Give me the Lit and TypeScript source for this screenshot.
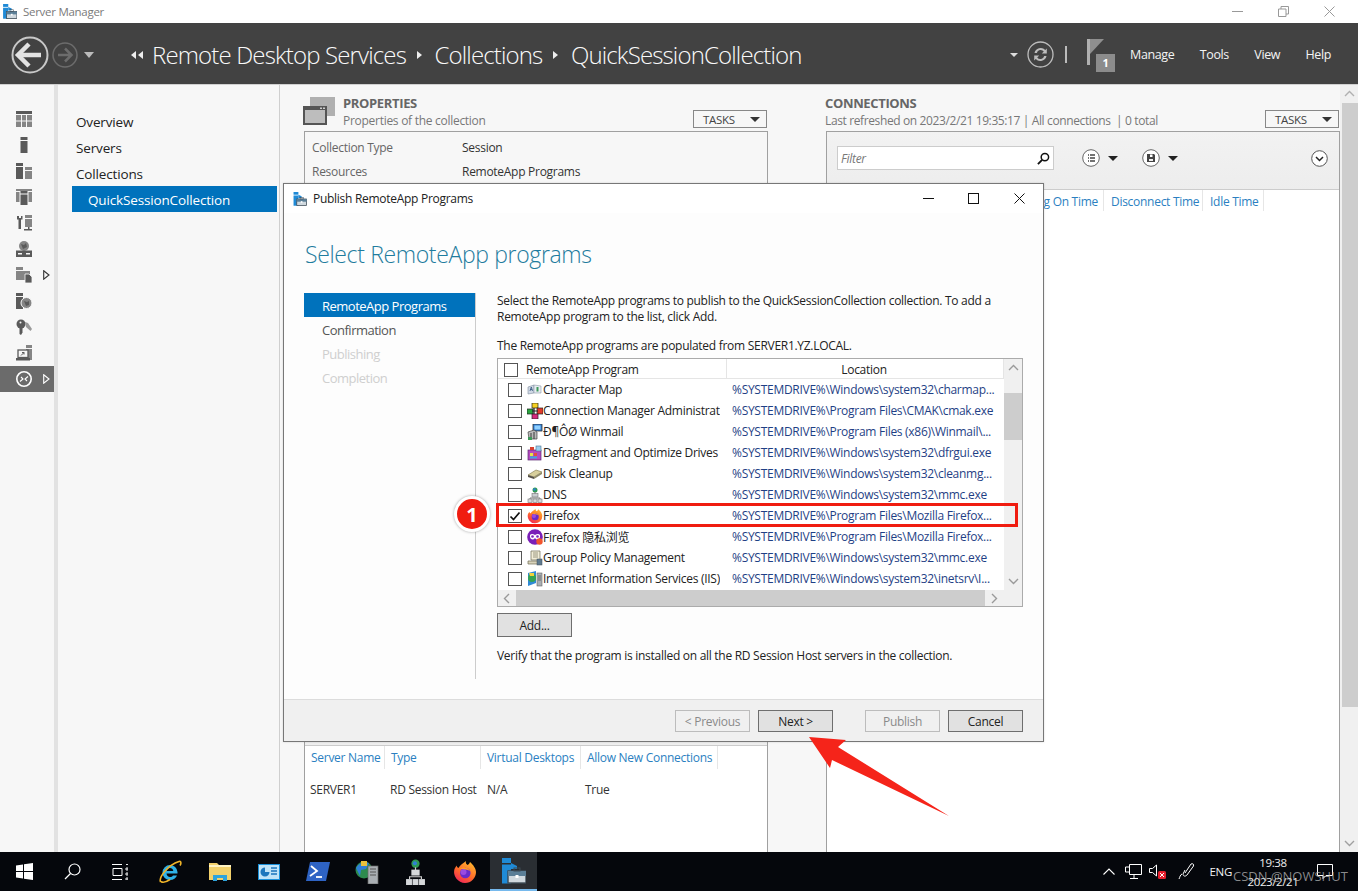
import { LitElement, html, css, svg } from "lit";
import { customElement } from "lit/decorators.js";

const smIcon = (w: number, h: number) => html`<svg width=${w} height=${h} viewBox="0 0 24 26">
  <rect x="0" y="0" width="9" height="5" fill="#1f8ad6"/><rect x="0" y="6.5" width="9" height="19" fill="#1f8ad6"/>
  <path d="M9 5l6 3v3H9z" fill="#1f8ad6"/>
  <rect x="6" y="13" width="18" height="12" fill="#cfd8de" stroke="#3c4a55" stroke-width="1.4"/>
  <rect x="6" y="13" width="18" height="5" fill="#5b7f97"/><rect x="12" y="10" width="6" height="3" fill="none" stroke="#3c4a55"/>
  <rect x="13.5" y="17" width="3" height="3" fill="#fff"/></svg>`;

const ffIcon = (s: number) => html`<svg width=${s} height=${s} viewBox="0 0 24 24">
  <defs><linearGradient id="ffg" x1="0.8" y1="0" x2="0.2" y2="1"><stop offset="0" stop-color="#ffbd2e"/><stop offset="0.55" stop-color="#ff6a2a"/><stop offset="1" stop-color="#f0215c"/></linearGradient></defs>
  <path d="M12 23A11 11 0 0 1 1.5 9C2.5 7 3 6.5 3.5 5.5 4 7 4.5 7.5 5.5 8 7 5 10 3.5 13 1c-.5 2 0 3 1.500 4 1-.5 2-1.500 2.500-3 3 2.500 6 6.500 6 10A11 11 0 0 1 12 23z" fill="url(#ffg)"/>
  <circle cx="12.300" cy="13" r="5.300" fill="#6a2bc9"/><circle cx="10.500" cy="12" r="3" fill="#9b4be0"/>
  <path d="M7 9c3-2.500 8-2 10 2-2.500-1.500-6-2-10-2z" fill="#ff9a2a"/></svg>`;

const pvIcon = html`<svg width="16" height="16" viewBox="0 0 16 16">
  <circle cx="8" cy="8" r="7.800" fill="#7a1fb8"/><path d="M3 6c1-1.500 3-1.500 5 0 2-1.500 4-1.500 5 0 .5 3-1 4.500-2.800 4.500S8.500 9 8 9s-.5 1.500-2.200 1.500S2.500 9 3 6z" fill="#fff"/>
  <circle cx="5.500" cy="7.500" r="1.300" fill="#7a1fb8"/><circle cx="10.500" cy="7.500" r="1.300" fill="#7a1fb8"/>
  <circle cx="12.500" cy="12.500" r="3.200" fill="#f2542d"/></svg>`;

const appIcons: Record<string, unknown> = {
  charmap: html`<svg width="16" height="16" viewBox="0 0 16 16"><path d="M1 5l6-2v8l-6 1z" fill="#cfd8e4" stroke="#7f8d9e" stroke-width=".6"/><path d="M7 3l7 1v7l-7 0z" fill="#e8edf2" stroke="#8c99a8" stroke-width=".6"/><path d="M3 9l1.300-4L5.500 9M3.400 7.500h1.800" stroke="#35567f" fill="none" stroke-width=".8"/><rect x="9.500" y="5" width="2" height="4.500" fill="#3e9a5a"/></svg>`,
  cmak: html`<svg width="16" height="16" viewBox="0 0 16 16"><rect x="5" y="0" width="6" height="5" fill="#f5d021" stroke="#222" stroke-width=".7"/><rect x="0" y="6" width="6" height="5" fill="#29a63f" stroke="#222" stroke-width=".7"/><rect x="10" y="5" width="6" height="6" fill="#e23a2a" stroke="#222" stroke-width=".7"/><rect x="5" y="11" width="6" height="5" fill="#d62a7c" stroke="#222" stroke-width=".7"/><path d="M7 5v6M5 8h6" stroke="#222" stroke-width="1.200"/></svg>`,
  winmail: html`<svg width="16" height="16" viewBox="0 0 16 16"><rect x="6" y="0" width="9" height="7" fill="#2f7fd6" stroke="#333" stroke-width=".8"/><rect x="7.500" y="1.500" width="6" height="4" fill="#8fd0ff"/><path d="M1 8l6-2 3 2v7H2z" fill="#b9b9b9" stroke="#444" stroke-width=".7"/><path d="M4 9v6M7 8v7" stroke="#3a3a3a"/><rect x="1" y="13" width="4" height="3" fill="#3e9a5a"/></svg>`,
  defrag: html`<svg width="16" height="16" viewBox="0 0 16 16"><rect x="1" y="5" width="13" height="10" fill="#b54ac0" stroke="#5c2b73" stroke-width=".7"/><rect x="3" y="8" width="3" height="3" fill="#e8e34a"/><rect x="7" y="8" width="3" height="3" fill="#e2513c"/><rect x="3" y="11.500" width="7" height="2" fill="#3fa7e0"/><rect x="9" y="1" width="5" height="5" fill="#9ad0ef" stroke="#4c6e8a" stroke-width=".6"/><rect x="3" y="2" width="4" height="3" fill="#d9412f"/></svg>`,
  disk: html`<svg width="16" height="16" viewBox="0 0 16 16"><path d="M1 9l8-5 6 2-8 5z" fill="#d8cf9c" stroke="#7a7448" stroke-width=".6"/><path d="M1 9l6 2v2L1 11z" fill="#55504a"/><path d="M7 11l8-5v2l-8 5z" fill="#8f8a68"/></svg>`,
  dns: html`<svg width="16" height="16" viewBox="0 0 16 16"><circle cx="8" cy="3" r="2.500" fill="#2f9a52"/><circle cx="7.500" cy="2.500" r="1.200" fill="#2f7fd6"/><path d="M8 5v3" stroke="#777"/><rect x="5" y="6.500" width="6" height="3.500" fill="#c9ccd0" stroke="#777" stroke-width=".6"/><path d="M3 12v-1h10v1" fill="none" stroke="#777"/><rect x="1" y="12" width="4" height="3.500" fill="#d5d7da" stroke="#777" stroke-width=".6"/><rect x="6" y="12" width="4" height="3.500" fill="#d5d7da" stroke="#777" stroke-width=".6"/><rect x="11" y="12" width="4" height="3.500" fill="#d5d7da" stroke="#777" stroke-width=".6"/></svg>`,
  gp: html`<svg width="16" height="16" viewBox="0 0 16 16"><path d="M4 1h9v9H4z" fill="#f2edd8" stroke="#6f6a55" stroke-width=".7"/><path d="M6 3h5M6 5h5M6 7h5" stroke="#77725c" stroke-width=".7"/><path d="M1 11h10l3 0v3H1z" fill="#d9d3bb" stroke="#6f6a55" stroke-width=".7"/><rect x="10" y="9" width="5" height="6" fill="#5f7a8f" stroke="#3f4c58" stroke-width=".5"/></svg>`,
  iis: html`<svg width="16" height="16" viewBox="0 0 16 16"><path d="M1 2l8-2v12l-8 3z" fill="#2f8ad6"/><circle cx="5" cy="7" r="4" fill="#35a352"/><path d="M2 2h5v3H3z" fill="#f0d33a"/><rect x="10" y="2" width="5" height="13" fill="#a9aeb3" stroke="#666" stroke-width=".6"/><path d="M11 5h3M11 7h3M11 9h3" stroke="#555" stroke-width=".7"/></svg>`,
};

const D = "#5a5a5a", M = "#858585";
const railIcons = [
  svg`<rect width="16" height="3" fill="${D}"/><g fill="${M}"><rect y="4" width="5" height="5.500"/><rect x="6" y="4" width="4" height="5.500"/><rect x="11" y="4" width="5" height="5.500"/><rect y="10.500" width="5" height="5.500"/><rect x="6" y="10.500" width="4" height="5.500"/><rect x="11" y="10.500" width="5" height="5.500"/></g>`,
  svg`<rect x="4.500" width="7" height="3" fill="${D}"/><rect x="4.500" y="4" width="7" height="12" fill="${D}"/>`,
  svg`<rect width="7" height="3" fill="${D}"/><rect y="4" width="7" height="12" fill="${D}"/><rect x="9" y="4" width="7" height="3" fill="${M}"/><rect x="9" y="8" width="7" height="8" fill="${M}"/>`,
  svg`<rect width="16" height="2" fill="${M}"/><rect y="3" width="3.500" height="10" fill="${M}"/><rect x="12.500" y="3" width="3.500" height="10" fill="${M}"/><rect x="4.500" y="2" width="7" height="2.500" fill="${D}"/><rect x="4.500" y="5.500" width="7" height="10.500" fill="${D}"/>`,
  svg`<path d="M1 1v3.500h1.500V14h2.500V4.500h1.500V1L5 1v2H3V1z" fill="${D}"/><rect x="9" width="7" height="3" fill="${M}"/><rect x="9" y="4" width="7" height="8" fill="${M}"/><rect x="12" y="12" width="1.500" height="2" fill="${D}"/><rect x="8" y="14" width="8" height="1.500" fill="${D}"/>`,
  svg`<circle cx="8" cy="5" r="5" fill="${M}"/><path d="M5 3l3 1 2-2 1 4-4 2z" fill="${D}"/><rect y="9.500" width="16" height="6.500" fill="${D}"/><rect x="2" y="12" width="4" height="1.500" fill="#f7f7f7"/><rect x="10" y="12" width="4" height="1.500" fill="#f7f7f7"/>`,
  svg`<rect width="7" height="3" fill="${M}"/><rect y="4" width="14" height="9" fill="${M}"/><path d="M9 7h4l3 3v6H9z" fill="${D}" stroke="#f7f7f7" stroke-width=".8"/>`,
  svg`<rect width="7" height="3" fill="${D}"/><rect y="4" width="7" height="12" fill="${D}"/><circle cx="10.500" cy="10" r="5.500" fill="${M}" stroke="#f7f7f7"/><path d="M8 8l3 1 2-1 0 4-3 1z" fill="${D}"/>`,
  svg`<circle cx="5" cy="5" r="4.500" fill="${D}"/><circle cx="4.500" cy="3.500" r="1" fill="#f7f7f7"/><path d="M3.500 8h3v5.500L5 16l-1.500-1z" fill="${D}"/><path d="M9 3l3 1 4 6-1.500 2L10 8z" fill="#9a9a9a"/>`,
  svg`<rect x="10" width="6" height="3" fill="${M}"/><rect x="10" y="4" width="6" height="11" fill="${M}"/><rect x="2" y="5" width="10" height="7.500" fill="#f7f7f7" stroke="${D}" stroke-width="1.300"/><path d="M5 10.500l3-3M6 7.500h2v2" stroke="${D}" fill="none"/><rect y="13" width="14" height="2.500" fill="${D}"/>`,
];
const rdsIcon = svg`<circle cx="8" cy="8" r="7.200" fill="none" stroke="#fff" stroke-width="1.600"/><path d="M4 10.500l3-2.500-2-2M12 5.500L9 8l2 2" fill="none" stroke="#fff" stroke-width="1.100"/>`;

const rows = [
  ["charmap", "Character Map", "%SYSTEMDRIVE%\\Windows\\system32\\charmap..."],
  ["cmak", "Connection Manager Administrati", "%SYSTEMDRIVE%\\Program Files\\CMAK\\cmak.exe"],
  ["winmail", "Ð¶ÔØ Winmail", "%SYSTEMDRIVE%\\Program Files (x86)\\Winmail\\..."],
  ["defrag", "Defragment and Optimize Drives", "%SYSTEMDRIVE%\\Windows\\system32\\dfrgui.exe"],
  ["disk", "Disk Cleanup", "%SYSTEMDRIVE%\\Windows\\system32\\cleanmg..."],
  ["dns", "DNS", "%SYSTEMDRIVE%\\Windows\\system32\\mmc.exe"],
  ["ff", "Firefox", "%SYSTEMDRIVE%\\Program Files\\Mozilla Firefox..."],
  ["pv", "Firefox 隐私浏览", "%SYSTEMDRIVE%\\Program Files\\Mozilla Firefox..."],
  ["gp", "Group Policy Management", "%SYSTEMDRIVE%\\Windows\\system32\\mmc.exe"],
  ["iis", "Internet Information Services (IIS)", "%SYSTEMDRIVE%\\Windows\\system32\\inetsrv\\I..."],
];

const chev = (dir: string, color = "#9a9a9a") => {
  const d: Record<string, string> = { up: "M1 7l4.500-4.500L10 7", down: "M1 3l4.500 4.500L10 3", left: "M7 1L2.500 5.500 7 10", right: "M3 1l4.500 4.500L3 10" };
  return html`<svg width="11" height="11" viewBox="0 0 11 11"><path d=${d[dir]} fill="none" stroke=${color} stroke-width="1.400"/></svg>`;
};

@customElement("app-root")
export class AppRoot extends LitElement {
  static styles = css`
    :host { display: block; width: 1358px; height: 891px; position: relative; overflow: hidden; background: #fff;
      font-family: "Open Sans", "Noto Sans CJK SC", sans-serif; font-size: 12px; color: #222; letter-spacing: -0.28px; }
    * { box-sizing: border-box; }
    svg { display: block; flex: none; }
    .shell { display: flex; flex-direction: column; height: 891px; }

    .titlebar { height: 23px; display: flex; align-items: center; padding-left: 3px; color: #7a7a7a; font-size: 11.500px; background: #fff; flex: none; }
    .titlebar span { margin-left: 6px; }
    .winctl { margin-left: auto; display: flex; }
    .winctl div { width: 46px; display: flex; justify-content: center; }
    .winctl.top { padding-right: 6px; }

    .header { height: 62px; flex: none; background: #424242; border-bottom: 1px solid #d0d0d0; display: flex; align-items: center; color: #fff; padding: 2px 0 0 11px; }
    .back { margin-right: 3px; }
    .drop { width: 0; height: 0; border-left: 5px solid transparent; border-right: 5px solid transparent; border-top: 6px solid #bbb; margin-left: 6px; }
    .crumbs { display: flex; align-items: center; margin-left: 37px; font-size: 24px; font-weight: 300; letter-spacing: -0.85px; color: #fafafa; }
    .crumbs svg { margin-right: 8px; }
    .crumbs svg.sep { margin: 0 12.500px 0 11px; }
    .hright { margin-left: auto; display: flex; align-items: center; }
    .hdrop { border-left: 4px solid transparent; border-right: 4px solid transparent; border-top: 4px solid #ddd; margin-right: 9px; }
    .bar { width: 2px; height: 17px; background: #bbb; margin: 0 20px 0 11px; }
    .flag { position: relative; width: 28px; height: 34px; margin-top: 3px; }
    .flagn { position: absolute; left: 9px; top: 15px; width: 19px; height: 18px; background: #8c8c8c; color: #fff; font-size: 11px; font-weight: 700; text-align: center; line-height: 18px; }
    .menu { display: flex; font-size: 12.500px; color: #f4f4f4; padding: 0 27px 0 15px; gap: 25.500px; letter-spacing: -0.4px; }

    .main { flex: 1; min-height: 0; display: flex; background: #f7f7f7; }
    .rail { width: 54px; flex: none; padding-top: 21px; }
    .rail .ri { height: 26px; display: flex; align-items: center; padding-left: 16px; position: relative; }
    .rail .ri.sel { background: #6b6b6b; }
    .tri { position: absolute; left: 43px; }
    .gutter { width: 4px; flex: none; background: #e2e2e2; }
    .nav { width: 222px; flex: none; border-right: 1px solid #cfcfcf; padding: 24px 0 0 14px; font-size: 13.500px; letter-spacing: -0.15px; color: #222; }
    .nav div { height: 26px; line-height: 26px; padding-left: 4px; }
    .nav .sel { background: #0072bc; color: #fff; width: 205px; padding-left: 16px; margin-top: -1px; line-height: 28px; }

    .content { flex: 1; min-width: 0; display: flex; padding-left: 24px; gap: 58px; }
    .col { display: flex; flex-direction: column; min-height: 0; }
    .col.l { width: 464px; }
    .col.r { width: 514px; }
    .sh { height: 46px; flex: none; display: flex; }
    .shtext { padding-top: 10px; }
    .shtitle { font-size: 13px; font-weight: 700; color: #666; line-height: 17px; letter-spacing: -0.35px; }
    .shsub { font-size: 12px; color: #777; line-height: 17px; }
    .shsub.tight { letter-spacing: -0.38px; }
    .col.l .shicon { margin: 12px 8px 0 -1px; }
    .col.r .shtext { margin-left: -1px; }
    .tasks { margin: 25px 1px 0 auto; width: 74px; height: 18px; border: 1px solid #888; display: flex; align-items: center; justify-content: space-between; padding: 0 6px 0 9px; color: #444; font-size: 11.500px; background: #f7f7f7; }
    .tasks i { border-left: 5px solid transparent; border-right: 5px solid transparent; border-top: 5px solid #333; }
    .box { border: 1px solid #a0a0a0; }
    .props { height: 500px; padding: 4px 7px; color: #666; flex: none; }
    .prow { display: grid; grid-template-columns: 150px 1fr; height: 24px; line-height: 24px; }
    .prow b { font-weight: 400; color: #333; }
    .lower { flex: 1; margin-top: 68px; background: #fff; border: 1px solid #a0a0a0; border-bottom: 0; min-height: 0; }
    .lowspace { height: 46px; background: #efefef; border-bottom: 1px solid #ccc; }
    .colheads { display: flex; height: 23px; align-items: center; color: #2b7fc1; }
    .colheads div { height: 100%; line-height: 23px; border-right: 1px solid #e6e6e6; padding-left: 6px; white-space: nowrap; }
    .srow { display: flex; margin-top: 9px; height: 24px; line-height: 24px; color: #333; }
    .srow div { padding-left: 5px; }

    .right { flex: 1; background: #fff; border: 1px solid #a0a0a0; border-bottom: 0; display: flex; flex-direction: column; }
    .tb { height: 58px; flex: none; background: linear-gradient(#f2f2f2, #ededed); border-bottom: 1px solid #ccc; display: flex; align-items: center; padding: 0 11px 5px 10px; }
    .filter { width: 217px; height: 24px; background: #fff; border: 1px solid #ccc; display: flex; align-items: center; justify-content: space-between; padding: 0 3px 0 3px; font-style: italic; color: #777; }
    .tbi { display: flex; align-items: center; gap: 8px; margin-left: 28px; }
    .tbi + .tbi { margin-left: 24px; }
    .tbi i { border-left: 5px solid transparent; border-right: 5px solid transparent; border-top: 5px solid #222; }
    .chevc { margin-left: auto; }
    .righthead { height: 21px; }
    .rh1 { text-align: right; padding-right: 5px; }
    .colheads .rh2 { padding-left: 7px; }
    .vbar { width: 18px; flex: none; background: #f0f0f0; display: flex; flex-direction: column; align-items: stretch; }
    .vbar .arr { height: 18px; display: flex; align-items: center; justify-content: center; }
    .outer .thumb { height: 604px; background: #cdcdcd; margin-left: 2px; }
    .outer .fill { flex: 1; }

    .taskbar { height: 39px; flex: none; background: #05070c; display: flex; align-items: stretch; position: relative; }
    .slot { flex: 0 0 49px; display: flex; align-items: center; justify-content: center; }
    .slot.s48 { flex-basis: 48px; }
    .slot.ie { margin-left: 2px; }
    .slot.active { background: #2a2e33; border-bottom: 2px solid #76b9ed; flex: 0 0 47px; margin-left: 1px; }
    .tray { margin-left: auto; display: flex; align-items: center; color: #f2f2f2; }
    .tray .net { margin-left: 10px; }
    .tray .vol { margin-left: 7px; }
    .tray .pen { margin-left: 12px; }
    .tray .note { margin: 0 25px 0 7px; }
    .eng { font-size: 11.500px; margin-left: 14px; letter-spacing: -0.3px; }
    .clock { width: 74px; margin-left: 4px; text-align: center; line-height: 19px; font-size: 11.500px; letter-spacing: -0.4px; color: #eee; }
    .wm { position: absolute; left: 1233px; top: 15px; font-size: 13px; color: rgba(190,190,190,.72); letter-spacing: 0; white-space: nowrap; }

    .dlg { position: absolute; left: 283px; top: 183px; width: 761px; height: 559px; background: #fdfdfd; border: 1px solid #777; display: flex; flex-direction: column; box-shadow: 0 0 2px rgba(0,0,0,.15); }
    .dtitle { height: 29px; flex: none; background: #fff; display: flex; align-items: center; padding-left: 9px; color: #222; font-size: 12px; }
    .dtitle span { margin-left: 6px; }
    .dtitle .winctl div { width: 45.500px; }
    .dtitle .winctl { padding-right: 1px; }
    .dhead { height: 80px; flex: none; padding: 25px 0 0 21px; font-size: 23px; line-height: 32px; font-weight: 300; color: #1f7c9e; letter-spacing: -0.35px; }
    .dbody { height: 386px; flex: none; display: flex; padding-left: 20px; }
    .steps { width: 172px; flex: none; border-right: 1px solid #ccc; font-size: 13px; letter-spacing: -0.5px; }
    .steps div { height: 24px; line-height: 26px; padding-left: 18px; color: #555; }
    .steps .on { background: #0072bc; color: #fff; width: 171px; }
    .steps .off { color: #cfcfcf; }
    .dmain { padding-left: 21px; width: 547px; color: #222; }
    .dmain p { margin: 0; line-height: 16px; white-space: nowrap; }
    .dmain p.l3 { margin-top: 13px; }
    .list { margin-top: 4px; width: 526px; height: 249px; background: #fff; border: 1px solid #ababab; display: flex; flex-direction: column; }
    .ltop { display: flex; flex: 1; min-height: 0; }
    .ltable { width: 506px; flex: none; }
    .lhead { height: 20px; border-bottom: 1px solid #e5e5e5; display: flex; align-items: center; }
    .lhead .c1 { width: 229px; height: 100%; display: flex; align-items: center; padding: 2px 0 0 6px; border-right: 1px solid #e5e5e5; }
    .lhead .c1 span { margin-left: 8px; }
    .lhead .c2 { flex: 1; height: 100%; line-height: 22px; text-align: center; padding-right: 2px; border-right: 1px solid #e5e5e5; }
    .cb { width: 14px; height: 14px; border: 1px solid #555; background: #fff; flex: none; display: flex; align-items: center; justify-content: center; }
    .lrow { height: 21px; display: flex; align-items: center; padding-left: 10px; }
    .lrow .ic { margin-left: 5px; width: 16px; }
    .lrow .nm { width: 177px; overflow: hidden; white-space: nowrap; color: #222; }
    .lrow .loc { margin-left: 12px; white-space: nowrap; color: #1f3f85; }
    .lv { background: #f0f0f0; }
    .lv .thumb { height: 47px; margin-top: 16px; background: #cdcdcd; }
    .lv .fill { flex: 1; }
    .lhs { height: 16px; flex: none; display: flex; align-items: stretch; background: #f0f0f0; }
    .lhs .arr { width: 18px; display: flex; align-items: center; justify-content: center; }
    .lhs .thumb { width: 469px; background: #cdcdcd; }
    .lhs .arr.rr { width: 19px; }
    .btn { width: 75px; height: 22px; background: #e1e1e1; border: 1px solid #6e6e6e; display: flex; align-items: center; justify-content: center; color: #222; }
    .btn.dis { background: #f0f0f0; border-color: #bcbcbc; color: #8a8a8a; }
    .add { margin-top: 6px; height: 24px; }
    .dmain p.v { margin-top: 11px; }
    .dfoot { margin-top: auto; height: 42px; flex: none; background: #f0f0f0; border-top: 1px solid #dcdcdc; display: flex; justify-content: flex-end; align-items: center; gap: 8px; padding: 1px 20px 0 0; }
    .dfoot .gap { width: 16px; }

    .redbox { position: absolute; left: 496px; top: 503px; width: 522px; height: 24px; border: 3px solid #f01c10; pointer-events: none; }
    .badge { position: absolute; left: 454px; top: 496px; width: 36px; height: 36px; border-radius: 50%; background: #f01c10; border: 3px solid #fff; box-shadow: 0 0 3px rgba(0,0,0,.35); color: #fff; font-size: 20px; font-weight: 700; display: flex; align-items: center; justify-content: center; letter-spacing: 0; }
    .arrow { position: absolute; left: 800px; top: 730px; }
  `;

  private rail() {
    return html`<div class="rail">
      ${railIcons.map((p, i) => html`<div class="ri"><svg width="16" height="16" viewBox="0 0 16 16">${p}</svg>
        ${i === 6 ? html`<svg class="tri" width="7" height="10" viewBox="0 0 7 10"><path d="M.7.8l5.300 4.200-5.300 4.200z" fill="none" stroke="#333" stroke-width="1.100"/></svg>` : ""}</div>`)}
      <div class="ri sel"><svg width="16" height="16" viewBox="0 0 16 16">${rdsIcon}</svg>
        <svg class="tri" width="7" height="10" viewBox="0 0 7 10"><path d="M.7.8l5.300 4.200-5.300 4.200z" fill="none" stroke="#fff" stroke-width="1.100"/></svg></div>
    </div>`;
  }

  private header() {
    return html`<div class="header">
      <svg class="back" width="38" height="38" viewBox="0 0 38 38"><circle cx="19" cy="19" r="17.500" fill="none" stroke="#c8c8c8" stroke-width="2"/><path d="M7 19h23" stroke="#e2e2e2" stroke-width="4.500"/><path d="M18 8L7 19l11 11" fill="none" stroke="#e2e2e2" stroke-width="4.500"/></svg>
      <svg width="26" height="26" viewBox="0 0 26 26"><circle cx="13" cy="13" r="12" fill="none" stroke="#6c6c6c" stroke-width="1.500"/><path d="M6 13h13M13 6.500l6.500 6.500-6.500 6.500" fill="none" stroke="#6c6c6c" stroke-width="2.500"/></svg>
      <div class="drop"></div>
      <div class="crumbs">
        <svg width="13" height="8" viewBox="0 0 13 8"><path d="M5 0v8L0 4zM12 0v8L7 4z" fill="#eee"/></svg>
        <span>Remote Desktop Services</span>
        <svg class="sep" width="5" height="8" viewBox="0 0 5 8"><path d="M0 0v8l5-4z" fill="#eee"/></svg>
        <span>Collections</span>
        <svg class="sep" width="5" height="8" viewBox="0 0 5 8"><path d="M0 0v8l5-4z" fill="#eee"/></svg>
        <span>QuickSessionCollection</span>
      </div>
      <div class="hright">
        <div class="drop hdrop"></div>
        <svg width="27" height="27" viewBox="0 0 27 27"><circle cx="13.500" cy="13.500" r="12.500" fill="none" stroke="#bdbdbd" stroke-width="1.300"/><path d="M7.500 12a6.300 6.300 0 0 1 10.800-3l1.500-1.500v5h-5l2-2a4 4 0 0 0-7 1.500zM19.500 15a6.300 6.300 0 0 1-10.800 3l-1.500 1.500v-5h5l-2 2a4 4 0 0 0 7-1.500z" fill="#bdbdbd"/></svg>
        <div class="bar"></div>
        <div class="flag"><svg width="18" height="26" viewBox="0 0 18 26"><rect width="3" height="26" fill="#b0b0b0"/><path d="M3 0h14L3 15z" fill="#8f8f8f"/></svg><div class="flagn">1</div></div>
        <div class="menu"><span>Manage</span><span>Tools</span><span>View</span><span>Help</span></div>
      </div>
    </div>`;
  }

  private leftCol() {
    const hs: [string, number][] = [["Server Name", 80], ["Type", 96], ["Virtual Desktops", 100], ["Allow New Connections", 137]];
    const cs: [string, number][] = [["SERVER1", 80], ["RD Session Host", 97], ["N/A", 98], ["True", 100]];
    return html`<div class="col l">
      <div class="sh">
        <svg class="shicon" width="32" height="28" viewBox="0 0 32 28"><rect x="7" width="25" height="19" fill="#b0b0b0"/><rect x="0" y="9" width="24" height="19" fill="#555"/><rect x="2" y="13" width="20" height="13" fill="#bdbdbd"/><rect x="17" y="10.500" width="2" height="1.500" fill="#ccc"/><rect x="20" y="10.500" width="2" height="1.500" fill="#ccc"/></svg>
        <div class="shtext"><div class="shtitle">PROPERTIES</div><div class="shsub">Properties of the collection</div></div>
        <div class="tasks"><span>TASKS</span><i></i></div>
      </div>
      <div class="box props">
        <div class="prow"><span>Collection Type</span><b>Session</b></div>
        <div class="prow"><span>Resources</span><b>RemoteApp Programs</b></div>
      </div>
      <div class="lower">
        <div class="lowspace"></div>
        <div class="colheads">${hs.map(([t, w]) => html`<div style="width:${w}px">${t}</div>`)}</div>
        <div class="srow">${cs.map(([t, w]) => html`<div style="width:${w}px">${t}</div>`)}</div>
      </div>
    </div>`;
  }

  private rightCol() {
    return html`<div class="col r">
      <div class="sh">
        <div class="shtext"><div class="shtitle">CONNECTIONS</div><div class="shsub tight">Last refreshed on 2023/2/21 19:35:17 | All connections&nbsp; | 0 total</div></div>
        <div class="tasks"><span>TASKS</span><i></i></div>
      </div>
      <div class="right">
        <div class="tb">
          <div class="filter"><span>Filter</span><svg width="13" height="13" viewBox="0 0 14 14"><circle cx="8.500" cy="5.500" r="4" fill="none" stroke="#111" stroke-width="1.600"/><path d="M5.500 8.500L1 13" stroke="#111" stroke-width="2"/></svg></div>
          <div class="tbi"><svg width="18" height="18" viewBox="0 0 18 18"><circle cx="9" cy="9" r="8.300" fill="#fff" stroke="#666"/><path d="M6 6h1M8 6h5M6 9h1M8 9h5M6 12h1M8 12h5" stroke="#444" stroke-width="1.500"/></svg><i></i></div>
          <div class="tbi"><svg width="18" height="18" viewBox="0 0 18 18"><circle cx="9" cy="9" r="8.300" fill="#fff" stroke="#666"/><path d="M5 5h7l1 1v7H5z" fill="#444"/><rect x="8" y="5.500" width="2.500" height="2.500" fill="#fff"/><rect x="7" y="10" width="4" height="2" fill="#eee"/></svg><i></i></div>
          <svg class="chevc" width="17" height="17" viewBox="0 0 17 17"><circle cx="8.500" cy="8.500" r="7.800" fill="#fff" stroke="#555"/><path d="M5 7l3.500 3.500L12 7" fill="none" stroke="#222" stroke-width="1.500"/></svg>
        </div>
        <div class="colheads righthead">
          <div class="rh1" style="width:277px">Log On Time</div>
          <div class="rh2" style="width:99px">Disconnect Time</div>
          <div class="rh2" style="width:61px">Idle Time</div>
        </div>
      </div>
    </div>`;
  }

  private taskbar() {
    return html`<div class="taskbar">
      <div class="slot s48"><svg width="17" height="17" viewBox="0 0 17 17"><path d="M0 2.500l7-1v6.500H0zM8 1.300L17 0v8H8zM0 9h7v6.500l-7-1zM8 9h9v8l-9-1.300z" fill="#fff"/></svg></div>
      <div class="slot s48"><svg width="17" height="17" viewBox="0 0 17 17"><circle cx="10.500" cy="6.500" r="5.500" fill="none" stroke="#fff" stroke-width="1.200"/><path d="M6.500 10.500L1 16" stroke="#fff" stroke-width="1.300"/></svg></div>
      <div class="slot s48"><svg width="16" height="16" viewBox="0 0 16 16"><path d="M0 .5h10M0 15.500h10M1 4.500h9v7H1z" fill="none" stroke="#fff"/><path d="M14 .5h2M14 4h2v2h-2zM14 9h2v2h-2zM14 14h2v2h-2z" fill="none" stroke="#fff" stroke-width=".9"/></svg></div>
      <div class="slot ie"><svg width="23" height="24" viewBox="0 0 23 24"><path d="M11 5a7.500 7.500 0 0 0-7.500 7.500C3.500 17 7 20 11 20c3.500 0 6-1.800 7-4.500h-4c-.7 1-1.700 1.500-3 1.500-1.800 0-3.300-1.300-3.500-3.500H18.500V12A7.500 7.500 0 0 0 11 5zm-3.400 6c.3-1.700 1.700-3 3.400-3s3.100 1.300 3.300 3z" fill="#2fb2e8"/><path d="M1.500 22C-.5 17 9 5 20 1.500c2-.6 2.500 1.500 1 4M2 21.500c2 1.500 6 0 9-2" fill="none" stroke="#f0b429" stroke-width="1.600"/></svg></div>
      <div class="slot"><svg width="22" height="19" viewBox="0 0 22 19"><path d="M0 1h8l2 2h12v15H0z" fill="#f2d06b"/><rect y="3" width="22" height="2" fill="#fff3c4"/><path d="M4 19v-6h14v6h-4v-3H8v3z" fill="#2ea3dc"/></svg></div>
      <div class="slot"><svg width="22" height="16" viewBox="0 0 22 16"><rect width="22" height="16" fill="#1a8fd8"/><rect x="1" y="1" width="20" height="14" fill="#bfe3f7"/><path d="M7 3.500a4.500 4.500 0 1 0 4.500 4.500H7z" fill="#1b76bd"/><path d="M13 4h6M13 7h6M13 10h6" stroke="#1b76bd" stroke-width="1.400"/></svg></div>
      <div class="slot"><svg width="24" height="19" viewBox="0 0 24 19"><path d="M4 0h20l-4 19H0z" fill="#2e63c4"/><path d="M5 4l6 5-7 5" fill="none" stroke="#fff" stroke-width="1.800"/><path d="M10 15h6" stroke="#fff" stroke-width="1.800"/></svg></div>
      <div class="slot"><svg width="24" height="24" viewBox="0 0 24 24"><circle cx="9" cy="10" r="8.500" fill="#2d8b4e"/><path d="M1 8c3-5 8-7 13-5l-3 6-5 1-1 6z" fill="#2f7fd6"/><rect x="6" y="1" width="6" height="5" fill="#e9c23d"/><rect x="13" y="6" width="10" height="18" fill="#a9aeb3" stroke="#666" stroke-width=".7"/><path d="M15 9h6M15 12h6M15 15h6" stroke="#555"/></svg></div>
      <div class="slot"><svg width="19" height="26" viewBox="0 0 16 22"><circle cx="8" cy="4" r="3.500" fill="#2f9a52"/><circle cx="7.500" cy="3.500" r="1.700" fill="#2f7fd6"/><path d="M8 7v3" stroke="#ccc"/><rect x="4.500" y="9" width="7" height="5" fill="#d5d7da"/><path d="M3 17v-2h10v2" fill="none" stroke="#ccc"/><rect x="0" y="17" width="5" height="5" fill="#d5d7da"/><rect x="5.500" y="17" width="5" height="5" fill="#d5d7da"/><rect x="11" y="17" width="5" height="5" fill="#d5d7da"/></svg></div>
      <div class="slot">${ffIcon(24)}</div>
      <div class="slot active">${smIcon(24, 26)}</div>
      <div class="tray">
        <svg width="12" height="7" viewBox="0 0 12 7"><path d="M.5 6.500L6 1l5.500 5.500" fill="none" stroke="#fff" stroke-width="1.100"/></svg>
        <svg class="net" width="17" height="16" viewBox="0 0 17 16"><path d="M4 3H.5v5H4M4.500 .5h12v10h-12zM9 11v3M5 14.500h8" fill="none" stroke="#fff"/></svg>
        <svg class="vol" width="17" height="15" viewBox="0 0 17 15"><path d="M.5 4.500h3L7.500 1v11l-4-3.500h-3z" fill="none" stroke="#fff"/><rect x="9" y="7" width="8" height="8" rx="1.500" fill="#e5202e"/><path d="M11 9l4 4M15 9l-4 4" stroke="#fff"/></svg>
        <svg class="pen" width="17" height="17" viewBox="0 0 17 17"><path d="M7 10l6-9c2-1 3 .5 2.500 2L9 12c-2 2-4 1-4-1l2-4M1 16c1-2 1-4 3-5" fill="none" stroke="#fff"/></svg>
        <span class="eng">ENG</span>
        <div class="clock"><div>19:38</div><div>2023/2/21</div></div>
        <svg class="note" width="16" height="15" viewBox="0 0 16 15"><path d="M.5.500h15v11H9l-3 3v-3H.5z" fill="none" stroke="#fff"/></svg>
      </div>
      <div class="wm">CSDN @NOWSHUT</div>
    </div>`;
  }

  private dialog() {
    return html`<div class="dlg">
      <div class="dtitle">${smIcon(14, 14)}<span>Publish RemoteApp Programs</span>
        <div class="winctl">
          <div><svg width="11" height="11" viewBox="0 0 11 11"><path d="M0 5.500h11" stroke="#111"/></svg></div>
          <div><svg width="11" height="11" viewBox="0 0 11 11"><rect x=".5" y=".5" width="10" height="10" fill="none" stroke="#111"/></svg></div>
          <div><svg width="11" height="11" viewBox="0 0 11 11"><path d="M.5.500l10 10M10.500.500l-10 10" stroke="#111"/></svg></div>
        </div></div>
      <div class="dhead">Select RemoteApp programs</div>
      <div class="dbody">
        <div class="steps"><div class="on">RemoteApp Programs</div><div>Confirmation</div><div class="off">Publishing</div><div class="off">Completion</div></div>
        <div class="dmain">
          <p>Select the RemoteApp programs to publish to the QuickSessionCollection collection. To add a</p>
          <p>RemoteApp program to the list, click Add.</p>
          <p class="l3">The RemoteApp programs are populated from SERVER1.YZ.LOCAL.</p>
          <div class="list">
            <div class="ltop">
              <div class="ltable">
                <div class="lhead"><div class="c1"><div class="cb"></div><span>RemoteApp Program</span></div><div class="c2">Location</div></div>
                ${rows.map(([k, n, l]) => html`<div class="lrow">
                  <div class="cb">${k === "ff" ? html`<svg width="12" height="12" viewBox="0 0 12 12"><path d="M1.500 6.500L4.500 9.500 10.500 2.500" fill="none" stroke="#111" stroke-width="1.700"/></svg>` : ""}</div>
                  <div class="ic">${k === "ff" ? ffIcon(16) : k === "pv" ? pvIcon : appIcons[k]}</div>
                  <div class="nm">${n}</div><div class="loc">${l}</div></div>`)}
              </div>
              <div class="vbar lv"><div class="arr">${chev("up")}</div><div class="thumb"></div><div class="fill"></div><div class="arr">${chev("down")}</div></div>
            </div>
            <div class="lhs"><div class="arr">${chev("left")}</div><div class="thumb"></div><div class="arr rr">${chev("right")}</div></div>
          </div>
          <div class="btn add">Add...</div>
          <p class="v">Verify that the program is installed on all the RD Session Host servers in the collection.</p>
        </div>
      </div>
      <div class="dfoot"><div class="btn dis">&lt; Previous</div><div class="btn">Next &gt;</div><div class="gap"></div><div class="btn dis">Publish</div><div class="btn">Cancel</div></div>
    </div>`;
  }

  render() {
    return html`<div class="shell">
      <div class="titlebar">${smIcon(14, 15)}<span>Server Manager</span>
        <div class="winctl top">
          <div><svg width="11" height="11" viewBox="0 0 11 11"><path d="M0 5.500h11" stroke="#999"/></svg></div>
          <div><svg width="11" height="11" viewBox="0 0 11 11"><path d="M.5 3h7.500v7.500H.5zM3 3V.5h7.500V8H8" fill="none" stroke="#999"/></svg></div>
          <div><svg width="11" height="11" viewBox="0 0 11 11"><path d="M.5.500l10 10M10.500.500l-10 10" stroke="#999"/></svg></div>
        </div></div>
      ${this.header()}
      <div class="main">
        ${this.rail()}
        <div class="gutter"></div>
        <div class="nav"><div>Overview</div><div>Servers</div><div>Collections</div><div class="sel">QuickSessionCollection</div></div>
        <div class="content">${this.leftCol()}${this.rightCol()}</div>
        <div class="vbar outer"><div class="arr">${chev("up", "#b0b0b0")}</div><div class="thumb"></div><div class="fill"></div><div class="arr">${chev("down", "#a0a0a0")}</div></div>
      </div>
      ${this.taskbar()}
    </div>
    ${this.dialog()}
    <div class="redbox"></div>
    <div class="badge">1</div>
    <svg class="arrow" width="150" height="90" viewBox="800 730 150 90"><path d="M809 737L846 740 838 747 949 816 832 760 830 768z" fill="#f5241a"/></svg>`;
  }
}
